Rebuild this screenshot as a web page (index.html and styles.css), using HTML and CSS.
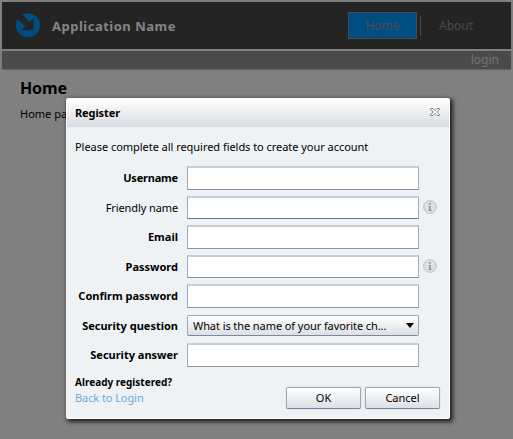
FILE: index.html
```html
<!DOCTYPE html>
<html lang="en">
<head>
<meta charset="utf-8">
<title>Application Name</title>
<link rel="stylesheet" href="styles.css">
</head>
<body>
<div class="app">
  <header class="header">
    <svg class="logo" width="25" height="25" viewBox="0 0 25 25"><circle cx="12" cy="12.3" r="12" fill="#004d82"/><path d="M0 0H4.5L13.5 9 17.5 5.5V17.3H5.5L9.5 13.5 0 5z" fill="#242424"/></svg>
    <div class="app-name"><span>Application Name</span></div>
    <nav class="nav"><a class="tab active">Home</a><i class="divider"></i><a class="tab about">About</a></nav>
  </header>
  <div class="subbar"><span class="login">login</span></div>
  <main class="content">
    <h1><span>Home</span></h1>
    <p>Home pa</p>
  </main>
</div>
<section class="dialog">
  <div class="titlebar"><span class="title">Register</span>
    <svg class="close" width="10" height="8" viewBox="0 0 10 8"><path d="M.5.5H3L5 2.5 7 .5H9.5V1.5L7 4 9.5 6.5V7.5H7L5 5.5 3 7.5H.5V6.5L3 4 .5 1.5z" fill="#f7f7f8" stroke="#777" stroke-width=".9"/></svg>
  </div>
  <div class="intro"><span>Please complete all required fields to create your account</span></div>
  <div class="form">
    <label><span class="username">Username</span></label><div class="field"></div><i></i>
    <label class="optional"><span>Friendly name</span></label><div class="field focus"></div><svg class="info" width="14" height="14" viewBox="0 0 14 14"><circle cx="7" cy="7" r="6.3" fill="#dde1e4" stroke="#b7bdc3"/><path d="M6 3h2v1.8H6zM5.5 6H8v4h1v1H5.2v-1H6V7h-.5z" fill="#98a1aa"/></svg>
    <label><span>Email</span></label><div class="field"></div><i></i>
    <label><span>Password</span></label><div class="field"></div><svg class="info" width="14" height="14" viewBox="0 0 14 14"><circle cx="7" cy="7" r="6.3" fill="#dde1e4" stroke="#b7bdc3"/><path d="M6 3h2v1.8H6zM5.5 6H8v4h1v1H5.2v-1H6V7h-.5z" fill="#98a1aa"/></svg>
    <label><span>Confirm password</span></label><div class="field"></div><i></i>
    <label><span>Security question</span></label><div class="select"><span>What is the name of your favorite ch...</span><svg width="8" height="5" viewBox="0 0 8 5"><path d="M0 0H8L4 5z"/></svg></div><i></i>
    <label><span>Security answer</span></label><div class="field"></div><i></i>
  </div>
  <footer class="footer">
    <div class="links"><strong>Already registered?</strong><a>Back to Login</a></div>
    <div class="button">OK</div><div class="button">Cancel</div>
  </footer>
</section>
</body>
</html>
```
FILE: styles.css
```css
* { box-sizing: border-box; }
body { margin: 0; width: 513px; height: 439px; overflow: hidden; background: #808080; color: #000; font: 11px/16px "Noto Sans", sans-serif; }
.app { height: 439px; padding: 2px; }
.header { height: 47px; background: #242424; display: flex; align-items: center; padding-left: 14px; }
.app-name { margin-left: 11px; color: #858585; font-size: 13px; font-weight: 700; letter-spacing: .5px; }
.nav { margin-left: auto; margin-right: 21px; display: flex; align-items: center; gap: 3px; color: #4c4c4c; font-size: 12px; }
.tab { height: 27px; width: 69px; line-height: 26px; text-align: center; }
.active { border: 1px solid #4b4a48; background: #004d82; }
.active { line-height: 25px; }
.about { width: 65px; padding-top: 1px; padding-right: 3px; }
.divider { width: 1px; height: 20px; background: #4b4a48; margin-right: 1px; }
.subbar { height: 18px; margin-top: 2px; padding-right: 12px; background: #4b4a48; box-shadow: 0 1px 1px #686868; text-align: right; color: #747474; font-size: 12px; line-height: 17px; }
.content { padding: 8px 18px; }
h1 { margin: 0; font-size: 16px; line-height: 22px; letter-spacing: -.15px; }
p { margin: 7px 0 0; }
.dialog { position: absolute; left: 66px; top: 98px; width: 384px; height: 321px; border: 1px solid #fafafa; border-radius: 2px; background: #eef2f4; box-shadow: 2px 2px 4px 1px #222; }
.titlebar { height: 28px; padding: 0 9px 0 8px; display: flex; align-items: center; justify-content: space-between; background: linear-gradient(#fff, #d8dbe1); font-weight: 700; }
.title { letter-spacing: -.1px; }
.close { margin-top: -2px; }
.intro { height: 39px; padding: 12px 8px 0; letter-spacing: -.04px; }
.form { display: grid; grid-template-columns: 120px 232px 20px; grid-template-rows: repeat(7, 29.5px); }
label { padding-right: 9px; text-align: right; line-height: 24px; font-weight: 700; white-space: nowrap; }
.username { letter-spacing: -.2px; }
.optional { font-weight: 400; letter-spacing: -.1px; }
.field { height: 23.5px; background: #fff; border: 1px solid #a0acba; border-top: 2px solid #c7ced6; border-bottom-color: #8796a5; }
.focus { border-bottom-color: #607b98; }
.info { margin: 4px 0 0 4px; }
.select { height: 21px; margin-top: 1.5px; padding: 0 4px 0 5px; border: 1px solid #9ba7b6; border-radius: 2px; border-bottom-color: #78899b; background: linear-gradient(#fff, #dcdfe4); display: flex; align-items: center; justify-content: space-between; letter-spacing: -.08px; }
.footer { display: flex; padding: 1.5px 9px 0 8px; gap: 4px; }
.links { flex: 1; display: flex; flex-direction: column; align-items: flex-start; }
.links strong { font-size: 10px; }
.links a { color: #70a9db; letter-spacing: -.08px; }
.button { width: 75px; height: 22px; margin-top: 13px; border: 1px solid #9ba8b7; border-bottom-color: #76889b; border-radius: 2px; background: linear-gradient(#fff, #dcdfe4); box-shadow: 0 0 1px #8593a5; text-align: center; line-height: 20px; }
```
